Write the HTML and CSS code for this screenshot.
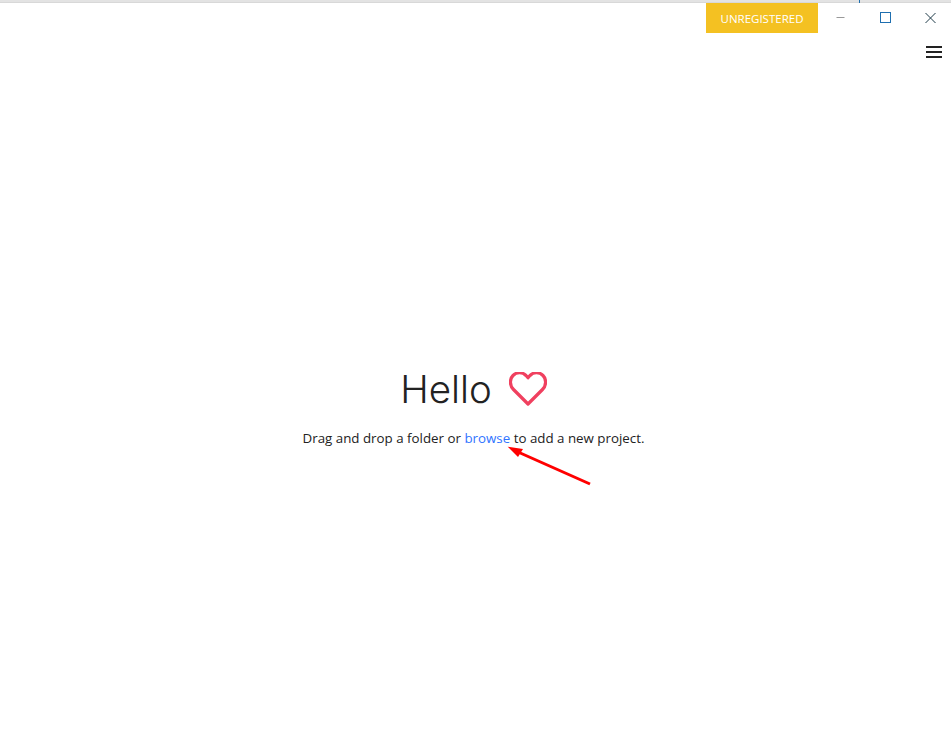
FILE: index.html
```html
<!DOCTYPE html>
<html lang="en">
<head>
<meta charset="utf-8">
<title>Hello</title>
<link rel="stylesheet" href="styles.css">
</head>
<body>
<div class="topline"><span class="topmark"></span></div>
<header class="titlebar">
  <button class="badge">UNREGISTERED</button>
  <div class="winctls">
    <div class="winctl">
      <svg width="11" height="11" viewBox="0 0 11 11"><path d="M1.5 5.500h8" stroke="#999" stroke-width="1" fill="none"/></svg>
    </div>
    <div class="winctl">
      <svg width="11" height="11" viewBox="0 0 11 11"><rect x="0.500" y="0.500" width="10" height="10" stroke="#1f6fb0" stroke-width="1" fill="none"/></svg>
    </div>
    <div class="winctl">
      <svg width="11" height="11" viewBox="0 0 11 11"><path d="M0.500 1l10 10M10.500 1l-10 10" stroke="#1f3a48" stroke-width="1" fill="none"/></svg>
    </div>
  </div>
</header>
<div class="menurow">
  <svg class="burger" width="16" height="12" viewBox="0 0 16 12"><path d="M0 1h16M0 6h16M0 11h16" stroke="#222" stroke-width="2" fill="none"/></svg>
</div>
<main class="hello">
  <h1 class="title">Hello
    <svg class="heart" width="38" height="34" viewBox="1 1.500 38 34"><path d="M20 33.500 L5.500 19 C1.500 15 1.500 8.500 5 5 C8.800 1.200 14.500 1.500 18 5 L20 7.200 L22 5 C25.500 1.500 31.200 1.200 35 5 C38.500 8.500 38.500 15 34.500 19 Z" fill="none" stroke="#f0405f" stroke-width="3.200" stroke-linejoin="round"/></svg>
  </h1>
  <p class="sub">Drag and drop a folder or <a class="link" href="#">browse</a> to add a new project.</p>
</main>
<svg class="arrow" width="90" height="45" viewBox="0 0 90 45"><path d="M84 38 L12 6" stroke="#f00" stroke-width="3" fill="none"/><path d="M1.700 0.700 L17 3 L12 11 Z" fill="#f00"/></svg>
</body>
</html>
```
FILE: styles.css
```css
* { box-sizing: border-box; }
html, body { margin: 0; height: 100%; }
body {
  background: #fff;
  color: #222;
  font-family: "Open Sans", "Noto Sans", sans-serif;
  display: flex;
  flex-direction: column;
  overflow: hidden;
  position: relative;
}
.topline {
  height: 3px;
  background: #e3e3e3;
  border-bottom: 1px solid #d8d8d8;
  position: relative;
  flex: none;
}
.topmark {
  position: absolute;
  left: 859px;
  top: 0;
  width: 1px;
  height: 3px;
  background: #1f6fb0;
}
.titlebar {
  display: flex;
  justify-content: flex-end;
  align-items: flex-start;
  height: 30px;
  flex: none;
}
.badge {
  width: 112px;
  height: 30px;
  border: 0;
  padding: 0;
  background: #f4c122;
  color: #fff;
  font: 11.500px "Open Sans", sans-serif;
}
.winctls {
  display: flex;
  flex: none;
  margin-right: -2px;
}
.winctl {
  width: 45px;
  height: 30px;
  padding-top: 9px;
  display: flex;
  align-items: flex-start;
  justify-content: center;
}
.menurow {
  display: flex;
  justify-content: flex-end;
  padding: 13px 9px 0 0;
  flex: none;
}
.burger { display: block; }
.hello {
  flex: 1;
  display: flex;
  flex-direction: column;
  align-items: center;
  padding: 305px 4px 0 0;
}
.title {
  margin: 0;
  font-family: "Inter", sans-serif;
  font-size: 38.500px;
  font-weight: 300;
  line-height: 52px;
  display: flex;
  align-items: center;
  gap: 17px;
}
.heart { display: block; }
.sub {
  margin: 14px 0 0;
  font-size: 13.330px;
  line-height: 18px;
}
.link { color: #2f74ff; text-decoration: none; }
.arrow {
  position: absolute;
  left: 506px;
  top: 446px;
}
```
